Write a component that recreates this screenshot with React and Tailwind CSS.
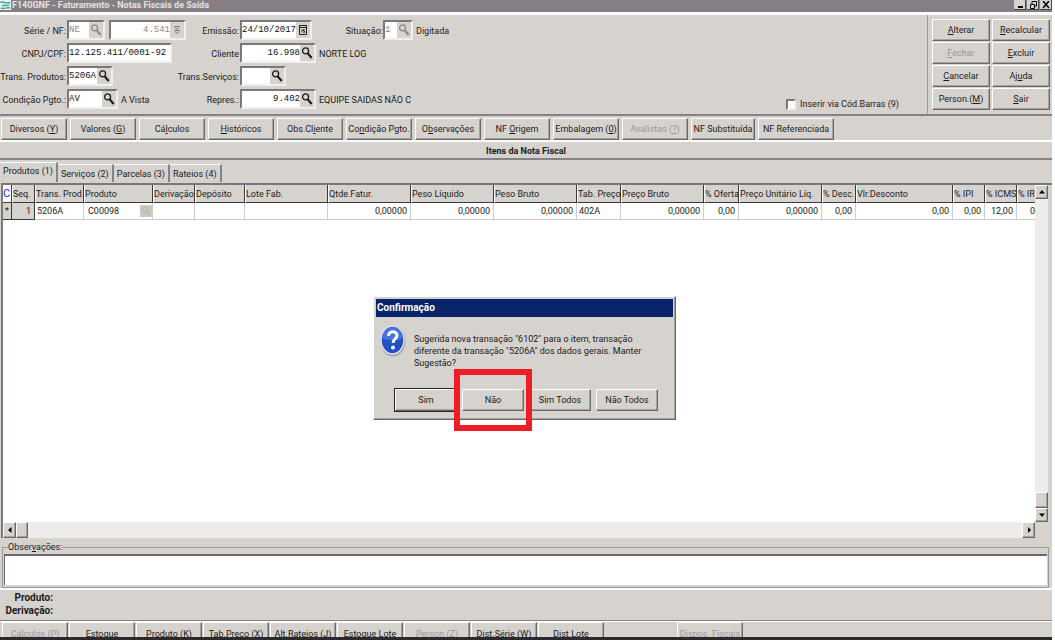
import React, { useState } from 'react'

const raised = 'border border-t-white border-l-white border-b-[#6b676b] border-r-[#6b676b] shadow-[inset_-1px_-1px_0_#a5a19f]'
const sunken = 'border-t-2 border-l-2 border-b-2 border-r-2 border-t-[#7b777b] border-l-[#7b777b] border-b-[#f1efec] border-r-[#f1efec]'
const hatch = 'bg-[repeating-conic-gradient(#e4e1de_0_25%,#f8f7f5_0_50%)] bg-size-[2px_2px]'

// "_" before a letter marks its shortcut underline
function Label({ text }) {
  const [before, after] = text.split('_')
  if (after === undefined) return <>{text}</>
  return <>{before}<u>{after[0]}</u>{after.slice(1)}</>
}

function Button({ text, disabled, className = '' }) {
  return (
    <button
      type="button"
      disabled={disabled}
      className={`shrink-0 bg-[#d6d3ce] text-center whitespace-nowrap disabled:text-[#9a9694] ${raised} ${className}`}
    >
      <Label text={text} />
    </button>
  )
}

function Magnifier({ muted }) {
  return (
    <svg viewBox="0 0 12 14" className={`h-3.5 w-3 ${muted ? 'text-[#8d898a]' : 'text-[#1c1a1a]'}`} fill="none" stroke="currentColor">
      <circle cx="4.6" cy="4.8" r="3" strokeWidth="1.3" />
      <path d="M6.8 7.4 L10.6 12" strokeWidth="2.2" />
    </svg>
  )
}

function CalendarIcon() {
  return (
    <svg viewBox="0 0 10 12" className="h-3 w-2.5" fill="none" stroke="#222" strokeWidth="1">
      <path d="M1 1.5h8M1 3.5h8M1.5 1v9.5h7V1M4 5.5v3M6.5 5.5h-1v1.5h1v1.5h-1" />
    </svg>
  )
}

function SpinIcon() {
  return (
    <svg viewBox="0 0 8 10" className="h-2.5 w-2" fill="none" stroke="#77737a" strokeWidth="1">
      <path d="M1.5 1.5h5M2 2.5l2 2 2-2M1.5 5.5h5M2 6.5l2 2 2-2" />
    </svg>
  )
}

function Field({ id, label, value, icon, muted, right, className }) {
  return (
    <div className={`flex h-5 shrink-0 bg-white ${sunken} ${className}`}>
      <input
        id={id}
        aria-label={label}
        defaultValue={value}
        disabled={muted}
        className={`h-4 min-w-0 flex-1 bg-white font-['Liberation_Mono',monospace] text-[9px] leading-4 outline-none ${right ? 'text-right' : ''} ${muted ? 'text-[#8d898a]' : 'text-[#111]'}`}
      />
      {icon && <span className="flex w-3.5 shrink-0 items-center justify-center bg-[#d6d3ce]">{icon}</span>}
    </div>
  )
}

const actions = [
  ['_Alterar'], ['_Recalcular'],
  ['_Fechar', true], ['_Excluir'],
  ['_Cancelar'], ['Aj_uda'],
  ['Person.(_M)'], ['_Sair']
]

const toolbar = [
  ['Diversos (_Y)'], ['Valores (_G)'], ['Cá_lculos'], ['_Históricos'], ['Obs.Cl_iente'], ['Co_ndição Pgto.'],
  ['O_bservações'], ['NF _Origem'], ['Embalagem (_0)'], ['Avalistas (_?)', true]
]

const footer = [
  ['Cálculos (_P)', true], ['Estoque'], ['Produto (_K)'], ['Tab.Preço (_X)'], ['Alt.Rateios (_J)'],
  ['Estoque Lote'], ['Person.(_Z)', true], ['Dist.Série (_W)'], ['Dist.Lote']
]

const tabs = ['Produtos (1)', 'Serviços (2)', 'Parcelas (3)', 'Rateios (4)']

const columns = [
  { title: 'C', width: 'w-[9px]', value: '*' },
  { title: 'Seq.', width: 'w-[23px]', value: '1', right: true },
  { title: 'Trans. Prod.', width: 'w-[49px]', value: '5206A' },
  { title: 'Produto', width: 'w-[69px]', value: 'C00098', search: true },
  { title: 'Derivação', width: 'w-[42px]', value: '' },
  { title: 'Depósito', width: 'w-[50px]', value: '' },
  { title: 'Lote Fab.', width: 'w-[83px]', value: '' },
  { title: 'Qtde.Fatur.', width: 'w-[83px]', value: '0,00000', right: true },
  { title: 'Peso Líquido', width: 'w-[83px]', value: '0,00000', right: true },
  { title: 'Peso Bruto', width: 'w-[83px]', value: '0,00000', right: true },
  { title: 'Tab. Preço', width: 'w-[44px]', value: '402A' },
  { title: 'Preço Bruto', width: 'w-[83px]', value: '0,00000', right: true },
  { title: '% Oferta', width: 'w-[35px]', value: '0,00', right: true },
  { title: 'Preço Unitário Líq.', width: 'w-[83px]', value: '0,00000', right: true },
  { title: '% Desc.', width: 'w-[34px]', value: '0,00', right: true },
  { title: 'Vlr.Desconto', width: 'w-[97px]', value: '0,00', right: true },
  { title: '% IPI', width: 'w-[32px]', value: '0,00', right: true },
  { title: '% ICMS', width: 'w-[32px]', value: '12,00', right: true },
  { title: '% IR', width: 'w-[34px]', value: '0,00', right: true }
]

function TitleBar() {
  const box = 'flex h-2.5 w-3 items-center justify-center bg-[#d6d3ce] border-b border-r border-[#4a474a]'
  return (
    <header className="flex h-3 shrink-0 items-start bg-[#868086]">
      <svg viewBox="0 0 12 11" className="h-[11px] w-3" fill="none">
        <path d="M0 0h11v10H0z" fill="#e9f4ef" />
        <path d="M0 2.5c3-2 6 2 10 0M1 8c3 1.5 6-1 9 0" stroke="#43a68c" strokeWidth="1.4" />
        <path d="M2 5.5h7" stroke="#43a68c" strokeWidth="1.4" />
      </svg>
      <h1 className="text-[9px] leading-[10px] font-bold text-[#e4e1de]">F140GNF - Faturamento - Notas Fiscais de Saída</h1>
      <div className="ml-auto flex gap-px">
        <button type="button" aria-label="Minimizar" className={box}>
          <svg viewBox="0 0 10 8" className="h-2 w-2.5" stroke="#000" strokeWidth="2"><path d="M3 6h5" /></svg>
        </button>
        <button type="button" aria-label="Restaurar" className={box}>
          <svg viewBox="0 0 10 8" className="h-2 w-2.5" fill="none" stroke="#000"><path d="M4 3V.5h4.5V5H7M2.5 3.5h4v4h-4z" /></svg>
        </button>
        <button type="button" aria-label="Fechar janela" className={box}>
          <svg viewBox="0 0 10 8" className="h-2 w-2.5" stroke="#000" strokeWidth="1.5"><path d="M2 0l6 7M8 0L2 7" /></svg>
        </button>
      </div>
    </header>
  )
}

function InvoiceHeader() {
  const [barcode, setBarcode] = useState(false)
  const lens = <Magnifier />

  return (
    <section className="flex h-[104px] shrink-0 border-t-[3px] border-b-2 border-t-white border-b-[#868286]">
      <div className="flex min-w-0 flex-1 pt-[5px]">
        <div className="grid h-fit grid-cols-[67px_173px_1fr] gap-y-[3px]">
          <label htmlFor="serie" className="pt-1 pr-px text-right whitespace-nowrap">Série / NF:</label>
          <div className="flex gap-1">
            <Field id="serie" value="NE" muted icon={<Magnifier muted />} className="w-[38px]" />
            <Field label="Número NF" value="4.541" muted right icon={<SpinIcon />} className="w-[77px]" />
            <label htmlFor="emissao" className="flex-1 pt-1 pr-px text-right whitespace-nowrap">Emissão:</label>
          </div>
          <div className="flex">
            <Field id="emissao" value="24/10/2017" icon={<CalendarIcon />} className="w-[72px]" />
            <label htmlFor="situacao" className="w-[71px] pt-1 text-right whitespace-nowrap">Situação:</label>
            <Field id="situacao" value="1" muted icon={<Magnifier muted />} className="w-[30px]" />
            <span className="pt-1 pl-[3px]">Digitada</span>
          </div>

          <label htmlFor="cnpj" className="pt-1 pr-px text-right whitespace-nowrap">CNPJ/CPF:</label>
          <div className="flex">
            <Field id="cnpj" value="12.125.411/0001-92" className="w-[105px]" />
            <label htmlFor="cliente" className="flex-1 pt-1 pr-px text-right">Cliente</label>
          </div>
          <div className="flex">
            <Field id="cliente" value="16.998" right icon={lens} className="w-[76px]" />
            <span className="pt-1 pl-[3px] whitespace-nowrap">NORTE LOG</span>
          </div>

          <label htmlFor="transprod" className="pt-1 pr-px text-right whitespace-nowrap">Trans. Produtos:</label>
          <div className="flex">
            <Field id="transprod" value="5206A" icon={lens} className="w-[46px]" />
            <label htmlFor="transserv" className="flex-1 pt-1 pr-px text-right">Trans.Serviços:</label>
          </div>
          <Field id="transserv" value="" icon={lens} className="w-[46px]" />

          <label htmlFor="condicao" className="pt-1 pr-px text-right whitespace-nowrap">Condição Pgto.:</label>
          <div className="flex">
            <Field id="condicao" value="AV" icon={lens} className="w-[51px]" />
            <span className="pt-1 pl-[3px]">A Vista</span>
            <label htmlFor="repres" className="flex-1 pt-1 pr-px text-right">Repres.:</label>
          </div>
          <div className="flex">
            <Field id="repres" value="9.402" right icon={lens} className="w-[76px]" />
            <span className="pt-1 pl-[3px] whitespace-nowrap">EQUIPE SAIDAS NÃO C</span>
          </div>
        </div>
        <label className="mt-auto mr-7 mb-[3px] ml-auto flex items-center gap-1 whitespace-nowrap">
          <input
            type="checkbox"
            checked={barcode}
            onChange={(e) => setBarcode(e.target.checked)}
            className={`h-[11px] w-[10px] appearance-none bg-white ${sunken}`}
          />
          Inserir via Cód.Barras (9)
        </label>
      </div>
      <div className="grid h-full grid-cols-[58px_58px] content-start gap-x-0.5 gap-y-px border-l border-[#9b979a] py-1 pr-0.5 pl-1">
        {actions.map(([text, disabled]) => (
          <Button key={text} text={text} disabled={disabled} className="h-[22px]" />
        ))}
      </div>
    </section>
  )
}

function ItemsGrid() {
  return (
    <div className="flex min-h-0 flex-1 flex-col border-t-2 border-l-2 border-t-[#7b777b] border-l-[#7b777b]">
      <div className="flex min-h-0 flex-1">
        <div className="min-w-0 flex-1 overflow-hidden bg-white">
          <table className="w-[1048px] table-fixed border-separate border-spacing-0">
            <thead>
              <tr className="h-[18px]">
                {columns.map((col, i) => (
                  <th
                    key={col.title}
                    className={`overflow-hidden border-r border-b border-[#3c393c] p-0 text-left font-normal whitespace-nowrap ${col.width} ${i === 0 ? 'bg-white text-[11px] text-[#1f1fe0]' : 'border-l border-l-white bg-[#d6d3ce]'}`}
                  >
                    {col.title}
                  </th>
                ))}
              </tr>
            </thead>
            <tbody>
              <tr className="h-[17px]">
                {columns.map((col, i) => (
                  <td
                    key={col.title}
                    className={`overflow-hidden border-r border-b p-0 whitespace-nowrap ${i < 2 ? 'border-[#3c393c] bg-[#d6d3ce]' : 'border-[#cfccca]'} ${col.right ? 'pr-[3px] text-right' : 'pl-0.5'}`}
                  >
                    {col.search ? (
                      <div className="flex items-center justify-between pl-0.5">
                        {col.value}
                        <span className="flex h-3 w-3 items-center justify-center bg-[#cbc8c4]">
                          <svg viewBox="0 0 10 10" className="h-2.5 w-2.5" fill="none" stroke="#b5b1ae"><circle cx="4" cy="4" r="2.5" /><path d="M6 6l3 3" /></svg>
                        </span>
                      </div>
                    ) : col.value}
                  </td>
                ))}
              </tr>
            </tbody>
          </table>
        </div>
        <div className={`mr-1 flex w-[13px] shrink-0 flex-col ${hatch}`}>
          <ScrollButton label="Acima" d="M1 5.5h6L4 2z" className="h-3.5" />
          <div className={`mt-auto h-4 bg-[#d6d3ce] ${raised}`} />
          <ScrollButton label="Abaixo" d="M1 2.5h6L4 6z" className="h-3.5" />
        </div>
      </div>
      <div className="flex h-4 shrink-0">
        <div className={`flex flex-1 ${hatch}`}>
          <ScrollButton label="Esquerda" d="M5.5 1v6L2 4z" className="w-[13px]" />
          <div className={`w-3 bg-[#d6d3ce] ${raised}`} />
          <ScrollButton label="Direita" d="M3 1v6l3-3z" className="ml-auto w-[13px]" />
        </div>
        <div className="w-[17px]" />
      </div>
    </div>
  )
}

function ScrollButton({ label, d, className }) {
  return (
    <button type="button" aria-label={label} className={`flex shrink-0 items-center justify-center bg-[#d6d3ce] ${raised} ${className}`}>
      <svg viewBox="0 0 8 8" className="h-2 w-2"><path d={d} /></svg>
    </button>
  )
}

function ConfirmDialog() {
  return (
    <div role="dialog" aria-label="Confirmação" className={`absolute top-[296px] left-[373px] h-[124px] w-[303px] bg-[#d6d3ce] p-0.5 ${raised}`}>
      <h2 className="h-[18px] bg-[#08246b] pl-px text-[10px] leading-[18px] font-bold text-white">Confirmação</h2>
      <div className="flex gap-2 pt-2 pl-1">
        <svg viewBox="0 0 26 32" className="h-8 w-[26px] shrink-0">
          <ellipse cx="13" cy="16" rx="12.5" ry="15.5" fill="#a9a7ae" />
          <ellipse cx="12.5" cy="15" rx="12" ry="14.5" fill="#e9ecf6" />
          <ellipse cx="12.5" cy="15" rx="10.8" ry="13.2" fill="#2450c4" />
          <path d="M2 13C3 5 8 2 12.5 2S22 5 23 13c-6 3-15 3-21 0z" fill="#4673dc" />
          <path d="M8.5 11c0-5.500 8.500-5.500 8.500-.5 0 3.500-4 3.500-4 7.500" fill="none" stroke="#fff" strokeWidth="3" />
          <circle cx="13" cy="22.5" r="2" fill="#fff" />
        </svg>
        <p className="pt-2 leading-[12px]">
          Sugerida nova transação "6102" para o item, transação<br />
          diferente da transação "5206A" dos dados gerais. Manter<br />
          Sugestão?
        </p>
      </div>
      <div className="mt-5 flex gap-[5px] pl-[19px]">
        <Button text="Sim" className="h-[22px] w-[62px] outline outline-[#222]" />
        <div className="relative">
          <Button text="Não" className="h-[22px] w-[62px]" />
          <div className="pointer-events-none absolute -top-5 -right-2 -bottom-5 -left-2 border-6 border-[#ee1c24]" />
        </div>
        <Button text="Sim Todos" className="h-[22px] w-[62px]" />
        <Button text="Não Todos" className="h-[22px] w-[62px]" />
      </div>
    </div>
  )
}

export default function App() {
  const [tab, setTab] = useState(0)

  return (
    <div className="relative h-screen overflow-hidden bg-white font-['Roboto',sans-serif] text-[9px] leading-[14px] text-[#1c1a1a]">
      <main className="mr-[3px] flex h-full flex-col border-b-[3px] border-[#2b292b] bg-[#d6d3ce]">
        <TitleBar />
        <InvoiceHeader />

        {/* Toolbar */}
        <nav className="flex h-[26px] shrink-0 gap-[3px] border-b-2 border-white pt-0.5 pl-px">
          {toolbar.map(([text, disabled]) => (
            <Button key={text} text={text} disabled={disabled} className="h-[22px] w-[66px]" />
          ))}
          <Button text="NF Substituída" className="h-[22px] w-[64px]" />
          <Button text="NF Referenciada" className="h-[22px] w-[76px]" />
        </nav>
        <h2 className="h-[18px] shrink-0 border-b-2 border-[#868286] text-center leading-[18px] font-bold">Itens da Nota Fiscal</h2>

        {/* Tabs */}
        <div role="tablist" className="flex h-[23px] shrink-0 items-end pb-px">
          {tabs.map((text, i) => (
            <button
              key={text}
              type="button"
              role="tab"
              aria-selected={tab === i}
              onClick={() => setTab(i)}
              className={`border-t border-r-2 border-t-white border-r-[#868286] pr-[3px] pl-[3px] whitespace-nowrap ${tab === i ? 'h-5 pb-1' : 'h-[18px]'}`}
            >
              {text}
            </button>
          ))}
        </div>

        <div className="flex min-h-0 flex-1 flex-col pl-px">
          <ItemsGrid />
        </div>

        {/* Observações */}
        <fieldset className="mt-0.5 mr-[3px] ml-0.5 h-12 shrink-0 border border-[#9b979a] px-px">
          <legend className="ml-1 leading-[14px]"><Label text="Obser_vações:" /></legend>
          <textarea aria-label="Observações" className="block h-[31px] w-full resize-none border-t-2 border-l border-[#6b676b] bg-white outline-none" />
        </fieldset>

        <section className="h-[33px] shrink-0 border-t-2 border-b border-t-white border-b-[#868286] pt-px text-[10px] leading-[13px] font-bold">
          <p className="w-[53px] text-right">Produto:</p>
          <p className="w-[53px] text-right">Derivação:</p>
        </section>

        <footer className="flex h-4 shrink-0 gap-px overflow-hidden border-t border-white pl-0.5">
          {footer.map(([text, disabled]) => (
            <Button key={text} text={text} disabled={disabled} className="h-[24px] w-[66px]" />
          ))}
          <Button text="Dispos. Fiscais" disabled className="ml-[72px] h-[24px] w-[66px]" />
        </footer>
      </main>
      <ConfirmDialog />
    </div>
  )
}
